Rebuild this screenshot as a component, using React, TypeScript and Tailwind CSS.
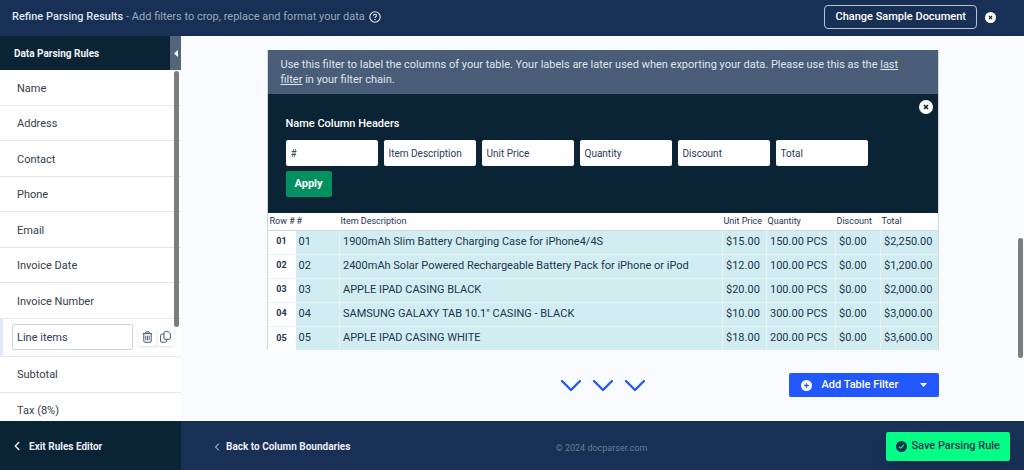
import { ChevronLeft } from 'lucide-react';
import React from 'react';

const rulesBefore = ['Name', 'Address', 'Contact', 'Phone', 'Email', 'Invoice Date', 'Invoice Number'];
const rulesAfter = ['Subtotal', 'Tax (8%)'];

const columns = ['#', 'Item Description', 'Unit Price', 'Quantity', 'Discount', 'Total'];

const rows = [
  ['01', '1900mAh Slim Battery Charging Case for iPhone4/4S', '$15.00', '150.00 PCS', '$0.00', '$2,250.00'],
  ['02', '2400mAh Solar Powered Rechargeable Battery Pack for iPhone or iPod', '$12.00', '100.00 PCS', '$0.00', '$1,200.00'],
  ['03', 'APPLE IPAD CASING BLACK', '$20.00', '100.00 PCS', '$0.00', '$2,000.00'],
  ['04', 'SAMSUNG GALAXY TAB 10.1" CASING - BLACK', '$10.00', '300.00 PCS', '$0.00', '$3,000.00'],
  ['05', 'APPLE IPAD CASING WHITE', '$18.00', '200.00 PCS', '$0.00', '$3,600.00'],
];

const CloseIcon = ({ className }: { className: string }) => (
  <svg viewBox="0 0 14 14" className={className} aria-hidden="true">
    <circle cx="7" cy="7" r="7" fill="#fff" />
    <path d="M5 5l4 4M9 5L5 9" stroke="#0a2435" strokeWidth="1.6" />
  </svg>
);

const TrashIcon = () => (
  <svg viewBox="0 0 11 12" fill="none" stroke="#44546f" className="h-3 w-[11px]" aria-hidden="true">
    <path d="M.8 2.6h9.4M3.4 2.4L4 .9h3l.6 1.5M1.8 2.8v7.3c0 .7.5 1.2 1.2 1.2h5c.7 0 1.2-.5 1.2-1.2V2.8" />
    <path d="M3.8 4.7v4.6M5.5 4.7v4.6M7.2 4.7v4.6" strokeWidth=".9" />
  </svg>
);

const CopyIcon = () => (
  <svg viewBox="0 0 11 12" fill="none" stroke="#44546f" className="h-3 w-[11px]" aria-hidden="true">
    <path d="M5 .7h3.4l2 2v4.6c0 .6-.4 1-1 1H5c-.6 0-1-.4-1-1V1.7c0-.6.4-1 1-1z" />
    <path d="M3.7 3.2H1.6c-.6 0-1 .4-1 1v6c0 .6.4 1 1 1h4c.6 0 1-.4 1-1V8.5" />
  </svg>
);

const RuleItem = ({ label }: { label: string }) => (
  <li className="flex flex-1 items-center border-b border-[#e6e7ea] pt-[3px] pl-[17px] text-[#363d48]">
    <a href="#rule">{label}</a>
  </li>
);

const Header = () => (
  <header className="flex h-9 shrink-0 items-center justify-between bg-[#183055] pr-7 pb-[2px] pl-3">
    <h1 className="flex items-center text-[11px] font-medium text-[#dfe5ec]">
      Refine Parsing Results
      <span className="ml-[3px] font-normal text-[#9aa7b9]">- Add filters to crop, replace and format your data</span>
      <svg viewBox="0 0 12 12" fill="none" stroke="#e4e9f0" className="ml-1 size-3" aria-hidden="true">
        <circle cx="6" cy="6" r="5.2" strokeWidth="1.1" />
        <path d="M4.5 4.8c0-2 3-2 3 0 0 1-1.5 1-1.5 2.1" strokeWidth="1.1" />
        <path d="M6 7.9v1.1" strokeWidth="1.2" />
      </svg>
    </h1>
    <div className="flex items-center gap-2">
      <button
        type="button"
        className="h-6 rounded-sm border border-[#b9c2cf] px-[10px] text-[11px] font-medium text-white"
      >
        Change Sample Document
      </button>
      <button type="button" aria-label="Close">
        <CloseIcon className="size-[11px]" />
      </button>
    </div>
  </header>
);

const Sidebar = () => (
  <aside className="relative flex w-[181px] shrink-0 flex-col bg-white">
    <div className="flex h-[34px] shrink-0 bg-[#0a2435]">
      <h2 className="flex flex-1 items-center pl-[14px] text-[10px] font-bold text-[#f0f3f7]">Data Parsing Rules</h2>
      <button type="button" aria-label="Collapse" className="flex w-[11px] items-center justify-center bg-[#55647d]">
        <svg viewBox="0 0 4 7" className="h-[7px] w-1" aria-hidden="true">
          <path d="M4 0v7L0 3.5z" fill="#fff" />
        </svg>
      </button>
    </div>
    <div className="min-h-0 flex-1 overflow-hidden">
      <ul className="flex h-[358px] flex-col text-[11px]">
        {rulesBefore.map((rule) => (
          <RuleItem key={rule} label={rule} />
        ))}
        <li className="flex h-[38px] items-center border-b border-l-3 border-b-[#e6e7ea] border-l-[#dfeafb] pl-[9px]">
          <input
            type="text"
            aria-label="Rule name"
            defaultValue="Line items"
            className="h-[26px] w-[121px] rounded-xs border border-[#d0d3d8] px-1 text-[11px] text-[#2b3a57]"
          />
          <button type="button" aria-label="Delete" className="ml-[5px] rounded-xs px-1 py-[3px] shadow-sm">
            <TrashIcon />
          </button>
          <button type="button" aria-label="Duplicate" className="rounded-xs px-[3px] py-[3px] shadow-sm">
            <CopyIcon />
          </button>
        </li>
        {rulesAfter.map((rule) => (
          <RuleItem key={rule} label={rule} />
        ))}
      </ul>
    </div>
    {/* overlay scrollbar thumb */}
    <div className="absolute top-[35px] right-[2px] h-64 w-[5px] rounded-full bg-[#7d7d7d]" />
  </aside>
);

const ColumnForm = () => (
  <form className="relative bg-[#0a2435] px-[18px] pt-[23px] pb-4" onSubmit={(e) => e.preventDefault()}>
    <button type="button" aria-label="Remove filter" className="absolute top-[6px] right-[5px]">
      <CloseIcon className="size-[14px]" />
    </button>
    <h3 className="text-[11px] leading-[14px] font-medium text-white">Name Column Headers</h3>
    <div className="mt-[9px] flex gap-[6px]">
      {columns.map((column) => (
        <input
          key={column}
          type="text"
          aria-label={column}
          defaultValue={column}
          className="h-[26px] w-[92px] rounded-xs bg-white px-[5px] text-[10px] text-[#2b3a57]"
        />
      ))}
    </div>
    <button type="submit" className="mt-[5px] h-[26px] rounded-xs bg-[#039061] px-[9px] text-[11px] font-bold text-white">
      Apply
    </button>
  </form>
);

const DataTable = () => (
  <table className="w-full table-fixed border-collapse text-[#22344e]">
    <colgroup>
      <col className="w-[28px]" />
      <col className="w-[44px]" />
      <col />
      <col className="w-[44px]" />
      <col className="w-[69px]" />
      <col className="w-[45px]" />
      <col className="w-[57px]" />
    </colgroup>
    <thead>
      <tr className="h-[17px] border-b border-[#d3d8dd] bg-white text-left text-[9px] leading-[15px] whitespace-nowrap">
        <th className="p-0 pl-[2px] font-normal">Row #</th>
        {columns.map((column) => (
          <th key={column} className="p-0 pl-px font-normal">
            {column}
          </th>
        ))}
      </tr>
    </thead>
    <tbody>
      {rows.map((row) => (
        <tr key={row[0]} className="h-6 border-b border-[#e6f4f6] text-[11px] whitespace-nowrap last:border-b-0">
          <th scope="row" className="bg-white p-0 text-[9px] font-bold">
            {row[0]}
          </th>
          {row.map((cell, index) => (
            <td key={index} className="border-r border-[#e6f4f6] bg-[#d1edf1] p-0 pl-[3px] last:border-r-0">
              {cell}
            </td>
          ))}
        </tr>
      ))}
    </tbody>
  </table>
);

const Arrow = () => (
  <svg viewBox="0 0 22 14" fill="none" stroke="#2458ff" className="h-[14px] w-[22px]" aria-hidden="true">
    <path d="M2 3l9 9 9-9" strokeWidth="2.4" strokeLinecap="round" strokeLinejoin="round" />
  </svg>
);

const Footer = () => (
  <footer className="flex h-[49px] shrink-0 items-stretch bg-[#183055] text-[10px] font-bold text-[#e8edf3]">
    <a href="#exit" className="flex w-[181px] items-center gap-[5px] bg-[#0a2435] pt-px pl-[10px]">
      <ChevronLeft size={14} strokeWidth={2.5} />
      Exit Rules Editor
    </a>
    <div className="grid flex-1 grid-cols-3 items-center pt-[2px] pr-[14px] pl-[30px]">
      <a href="#back" className="flex items-center gap-[3px]">
        <ChevronLeft size={12} />
        Back to Column Boundaries
      </a>
      <p className="pt-1 pr-[18px] text-center text-[9px] font-normal text-[#6c7b92]">© 2024 docparser.com</p>
      <button
        type="button"
        className="flex h-[29px] items-center gap-1 justify-self-end rounded-xs bg-[#03ff85] px-[10px] text-[11px] font-medium text-[#123050] shadow-lg"
      >
        <svg viewBox="0 0 12 12" className="size-[11px]" aria-hidden="true">
          <circle cx="6" cy="6" r="6" fill="#123050" />
          <path d="M3.4 6.2l1.8 1.7 3.3-3.6" fill="none" stroke="#03ff85" strokeWidth="1.3" />
        </svg>
        Save Parsing Rule
      </button>
    </div>
  </footer>
);

export default function App() {
  return (
    <div className="flex h-screen flex-col overflow-hidden font-[Roboto,sans-serif]">
      <Header />
      <div className="flex min-h-0 flex-1">
        <Sidebar />
        <main className="relative min-w-0 flex-1 bg-[#fafbff] px-4 pt-[14px]">
          <div className="mx-auto max-w-2xl">
            <section className="border-x border-[#d3d7de]">
              <p className="bg-[#4a5d78] py-[7px] pr-8 pl-[13px] text-[11px] leading-[15px] text-[#dfe5ec]">
                Use this filter to label the columns of your table. Your labels are later used when exporting your data.
                Please use this as the <u>last</u> <u>filter</u> in your filter chain.
              </p>
              <ColumnForm />
              <DataTable />
            </section>
            <div className="mt-[23px] grid grid-cols-3 items-center">
              <div className="col-start-2 flex justify-center gap-[10px]">
                <Arrow />
                <Arrow />
                <Arrow />
              </div>
              <button
                type="button"
                className="flex h-6 w-[150px] items-center justify-self-end rounded-xs bg-[#2458ff] px-3 text-[11px] font-medium text-white"
              >
                <svg viewBox="0 0 12 12" className="size-[11px]" aria-hidden="true">
                  <circle cx="6" cy="6" r="6" fill="#fff" />
                  <path d="M6 3.5v5M3.5 6h5" stroke="#2458ff" strokeWidth="1.4" />
                </svg>
                <span className="ml-[10px]">Add Table Filter</span>
                <svg viewBox="0 0 7 4" className="ml-auto h-1 w-[7px]" aria-hidden="true">
                  <path d="M0 0h7L3.5 4z" fill="#fff" />
                </svg>
              </button>
            </div>
          </div>
          {/* overlay scrollbar thumb */}
          <div className="absolute top-[202px] right-px h-[120px] w-[5px] rounded-full bg-[#7d7d7d]" />
        </main>
      </div>
      <Footer />
    </div>
  );
}
